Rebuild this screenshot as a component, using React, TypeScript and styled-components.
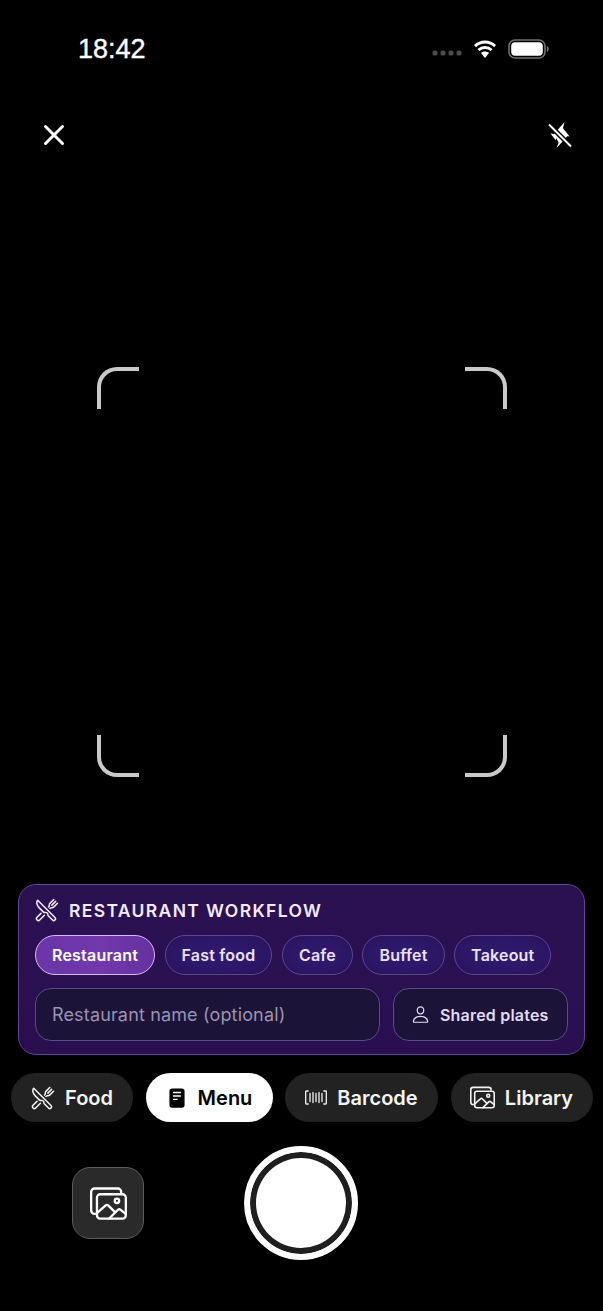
import React from "react";
import styled, { createGlobalStyle } from "styled-components";
import { IoImagesOutline, IoPersonOutline, IoRestaurantOutline, IoReader } from "react-icons/io5";

const Global = createGlobalStyle`
  html, body { margin: 0; padding: 0; background: #000; }
  * { box-sizing: border-box; }
`;

const Screen = styled.div`
  width: 603px;
  height: 1311px;
  background: #000;
  color: #fff;
  font-family: Inter, "Liberation Sans", sans-serif;
  display: flex;
  flex-direction: column;
  overflow: hidden;
`;

const StatusBar = styled.div`
  height: 98px;
  padding: 32px 54px 0 78px;
  display: flex;
  justify-content: space-between;
  align-items: flex-start;
`;

const Clock = styled.span`
  font-family: "Liberation Sans", Inter, sans-serif;
  font-size: 27px;
  line-height: 34px;
  font-weight: 400;
  -webkit-text-stroke: 0.4px #fff;
`;

const StatusIcons = styled.div`
  display: flex;
  align-items: center;
  gap: 10px;
  height: 34px;
`;

const TopBar = styled.div`
  height: 74px;
  padding: 0 30px 0 41px;
  display: flex;
  justify-content: space-between;
  align-items: center;
`;

const IconButton = styled.button`
  width: 26px;
  height: 26px;
  padding: 0;
  border: 0;
  background: none;
  display: flex;
  align-items: center;
  justify-content: center;
`;

const Viewfinder = styled.div`
  width: 410px;
  height: 410px;
  margin: 195px 0 107px 97px;
  display: flex;
  flex-direction: column;
  justify-content: space-between;
`;

const CornerRow = styled.div`
  display: flex;
  justify-content: space-between;
`;

const Corner = styled.span<{ $v: "top" | "bottom"; $h: "left" | "right" }>`
  width: 42px;
  height: 42px;
  border-color: #c9c9c9;
  border-style: solid;
  border-width: 0;
  border-${(p) => p.$v}-width: 4px;
  border-${(p) => p.$h}-width: 4px;
  border-${(p) => p.$v}-${(p) => p.$h}-radius: 20px;
`;

const Panel = styled.section`
  width: 567px;
  height: 171px;
  margin-left: 18px;
  padding: 15px 16px 13px 16px;
  border: 1px solid #5e4590;
  border-radius: 18px;
  background: linear-gradient(180deg, #2a1150 0%, #2b1052 60%, #2a0f50 100%);
  display: flex;
  flex-direction: column;
`;

const PanelHeading = styled.div`
  height: 20px;
  display: flex;
  align-items: center;
  gap: 10px;
  color: #f3ebff;
  font-size: 17.5px;
  font-weight: 600;
  letter-spacing: 1.35px;
`;

const ChipRow = styled.div`
  margin-top: 15px;
  display: flex;
  gap: 9.5px;
`;

const Chip = styled.button<{ $active?: boolean }>`
  height: 40px;
  padding: 0 16px;
  border-radius: 20px;
  border: 1px solid ${(p) => (p.$active ? "#d9bcf7" : "#5d4691")};
  background: ${(p) =>
    p.$active
      ? "linear-gradient(90deg, #6a36a8 0%, #7238ad 55%, #6431a0 100%)"
      : "radial-gradient(ellipse at 50% 50%, #2f1a72 0%, #2c1766 60%, #2a1259 100%)"};
  color: ${(p) => (p.$active ? "#fff" : "#ece2fd")};
  font: 600 16px Inter, "Liberation Sans", sans-serif;
  letter-spacing: 0.2px;
`;

const FieldRow = styled.div`
  margin-top: 13px;
  display: flex;
  gap: 13px;
`;

const NameField = styled.div`
  width: 345px;
  height: 53px;
  padding: 0 16px;
  display: flex;
  align-items: center;
  border: 1px solid #5a4a86;
  border-radius: 16px;
  background: #1c1338;
  color: #9b93ae;
  font-size: 18px;
  letter-spacing: 0.15px;
`;

const SharedButton = styled.button`
  width: 175px;
  height: 53px;
  padding: 0 0 0 17px;
  display: flex;
  align-items: center;
  gap: 10px;
  border: 1px solid #5a4a86;
  border-radius: 16px;
  background: #1c1338;
  color: #e3dbf2;
  font: 600 16px Inter, "Liberation Sans", sans-serif;
  letter-spacing: 0.2px;
`;

const ModeRow = styled.div`
  margin: 18px 0 0 11px;
  display: flex;
  gap: 12.5px;
`;

const ModePill = styled.button<{ $active?: boolean; $w: number; $gap: number }>`
  width: ${(p) => p.$w}px;
  height: 49px;
  padding: 0;
  border: 0;
  border-radius: 25px;
  background: ${(p) => (p.$active ? "#fff" : "#222222")};
  color: ${(p) => (p.$active ? "#000" : "#f4f4f4")};
  display: flex;
  align-items: center;
  justify-content: center;
  gap: ${(p) => p.$gap}px;
  font: 600 20px Inter, "Liberation Sans", sans-serif;
`;

const CaptureRow = styled.div`
  margin: 24px 0 0 72px;
  display: flex;
  align-items: center;
  gap: 100px;
`;

const GalleryButton = styled.button`
  width: 72px;
  height: 72px;
  padding: 0;
  border: 1px solid #5c5c5c;
  border-radius: 18px;
  background: #2a2a2a;
  display: flex;
  align-items: center;
  justify-content: center;
`;

const Shutter = styled.button`
  width: 114px;
  height: 114px;
  padding: 0;
  border: 6px solid #fff;
  border-radius: 50%;
  background: #fff;
  box-shadow: inset 0 0 0 6px #1f1f1f;
`;

const Barcode = () => (
  <svg width="22" height="15" viewBox="0 0 22 15" fill="none" stroke="#f4f4f4" strokeWidth="1.3" strokeLinecap="round" strokeLinejoin="round">
    <path d="M3.2 1H1.4a.7.7 0 0 0-.7.7v11.6a.7.7 0 0 0 .7.7h1.8" />
    <path d="M18.8 1h1.8a.7.7 0 0 1 .7.7v11.6a.7.7 0 0 1-.7.7h-1.8" />
    <path d="M5 3.5v8M8 2.5v10M11 3.5v8M14 2.5v10M17 3.5v8" />
  </svg>
);

const Wifi = () => (
  <svg width="26" height="19" viewBox="0 0 26 19" fill="#fff">
    <path d="M13 3.6c3.5 0 6.7 1.4 9.1 3.6l1.9-2.2A16.3 16.3 0 0 0 13 .6 16.3 16.3 0 0 0 2 5l1.9 2.2A13.4 13.4 0 0 1 13 3.6z" />
    <path d="M13 9c2.1 0 4.1.8 5.6 2.1l1.9-2.2A11.3 11.3 0 0 0 13 6a11.3 11.3 0 0 0-7.5 2.9l1.9 2.2A8.4 8.4 0 0 1 13 9z" />
    <path d="M13 11.6c-1.6 0-3 .5-4 1.5l4 5 4-5c-1-1-2.4-1.5-4-1.5z" />
  </svg>
);

const Battery = () => (
  <svg width="41" height="20" viewBox="0 0 41 20">
    <rect x="1" y="1" width="36" height="18" rx="6" fill="none" stroke="#707070" strokeWidth="1.6" />
    <rect x="3.2" y="3.2" width="31.6" height="13.6" rx="4" fill="#fff" />
    <path d="M38.8 7v6c1.2-.4 2-1.6 2-3s-.8-2.6-2-3z" fill="#707070" />
  </svg>
);

const SignalDots = () => (
  <svg width="30" height="6" viewBox="0 0 30 6" fill="#4a4a4a" style={{ marginTop: 8 }}>
    <circle cx="3" cy="3" r="2.6" /><circle cx="11" cy="3" r="2.6" />
    <circle cx="19" cy="3" r="2.6" /><circle cx="27" cy="3" r="2.6" />
  </svg>
);

const CloseIcon = () => (
  <svg width="24" height="24" viewBox="0 0 24 24" stroke="#fff" strokeWidth="3" strokeLinecap="round">
    <path d="M3.5 3.5l17 17M20.5 3.5l-17 17" />
  </svg>
);

const FlashOff = () => (
  <svg width="26" height="30" viewBox="0 0 26 30">
    <path d="M17.5 2L7 14l4.6 8.5-2 5.5L20.5 16 16 8z" fill="#fff" transform="translate(0,0)" />
    <path d="M3 14.5h8l1.5 3M14 13h9" stroke="none" fill="none" />
    <path d="M3.5 13.5l8 1.5-3 5zM22.5 16.5l-8-1.5 3-5z" fill="#fff" />
    <path d="M2 4.5l22 22" stroke="#000" strokeWidth="5" />
    <path d="M2 4.5l22 22" stroke="#fff" strokeWidth="2" />
  </svg>
);

export default function App() {
  return (
    <Screen>
      <Global />
      <StatusBar>
        <Clock>18:42</Clock>
        <StatusIcons>
          <SignalDots />
          <Wifi />
          <Battery />
        </StatusIcons>
      </StatusBar>
      <TopBar>
        <IconButton aria-label="Close"><CloseIcon /></IconButton>
        <IconButton aria-label="Flash"><FlashOff /></IconButton>
      </TopBar>
      <Viewfinder>
        <CornerRow>
          <Corner $v="top" $h="left" />
          <Corner $v="top" $h="right" />
        </CornerRow>
        <CornerRow>
          <Corner $v="bottom" $h="left" />
          <Corner $v="bottom" $h="right" />
        </CornerRow>
      </Viewfinder>
      <Panel>
        <PanelHeading>
          <IoRestaurantOutline size={24} color="#f3ebff" />
          RESTAURANT WORKFLOW
        </PanelHeading>
        <ChipRow>
          <Chip $active>Restaurant</Chip>
          <Chip>Fast food</Chip>
          <Chip>Cafe</Chip>
          <Chip>Buffet</Chip>
          <Chip>Takeout</Chip>
        </ChipRow>
        <FieldRow>
          <NameField>Restaurant name (optional)</NameField>
          <SharedButton>
            <IoPersonOutline size={19} color="#e3dbf2" />
            Shared plates
          </SharedButton>
        </FieldRow>
      </Panel>
      <ModeRow>
        <ModePill $w={122} $gap={10}><IoRestaurantOutline size={24} />Food</ModePill>
        <ModePill $w={127} $gap={10} $active><IoReader size={22} />Menu</ModePill>
        <ModePill $w={153} $gap={10}><Barcode />Barcode</ModePill>
        <ModePill $w={142} $gap={10}><IoImagesOutline size={25} />Library</ModePill>
      </ModeRow>
      <CaptureRow>
        <GalleryButton aria-label="Open library"><IoImagesOutline size={37} color="#fff" /></GalleryButton>
        <Shutter aria-label="Capture" />
      </CaptureRow>
    </Screen>
  );
}
